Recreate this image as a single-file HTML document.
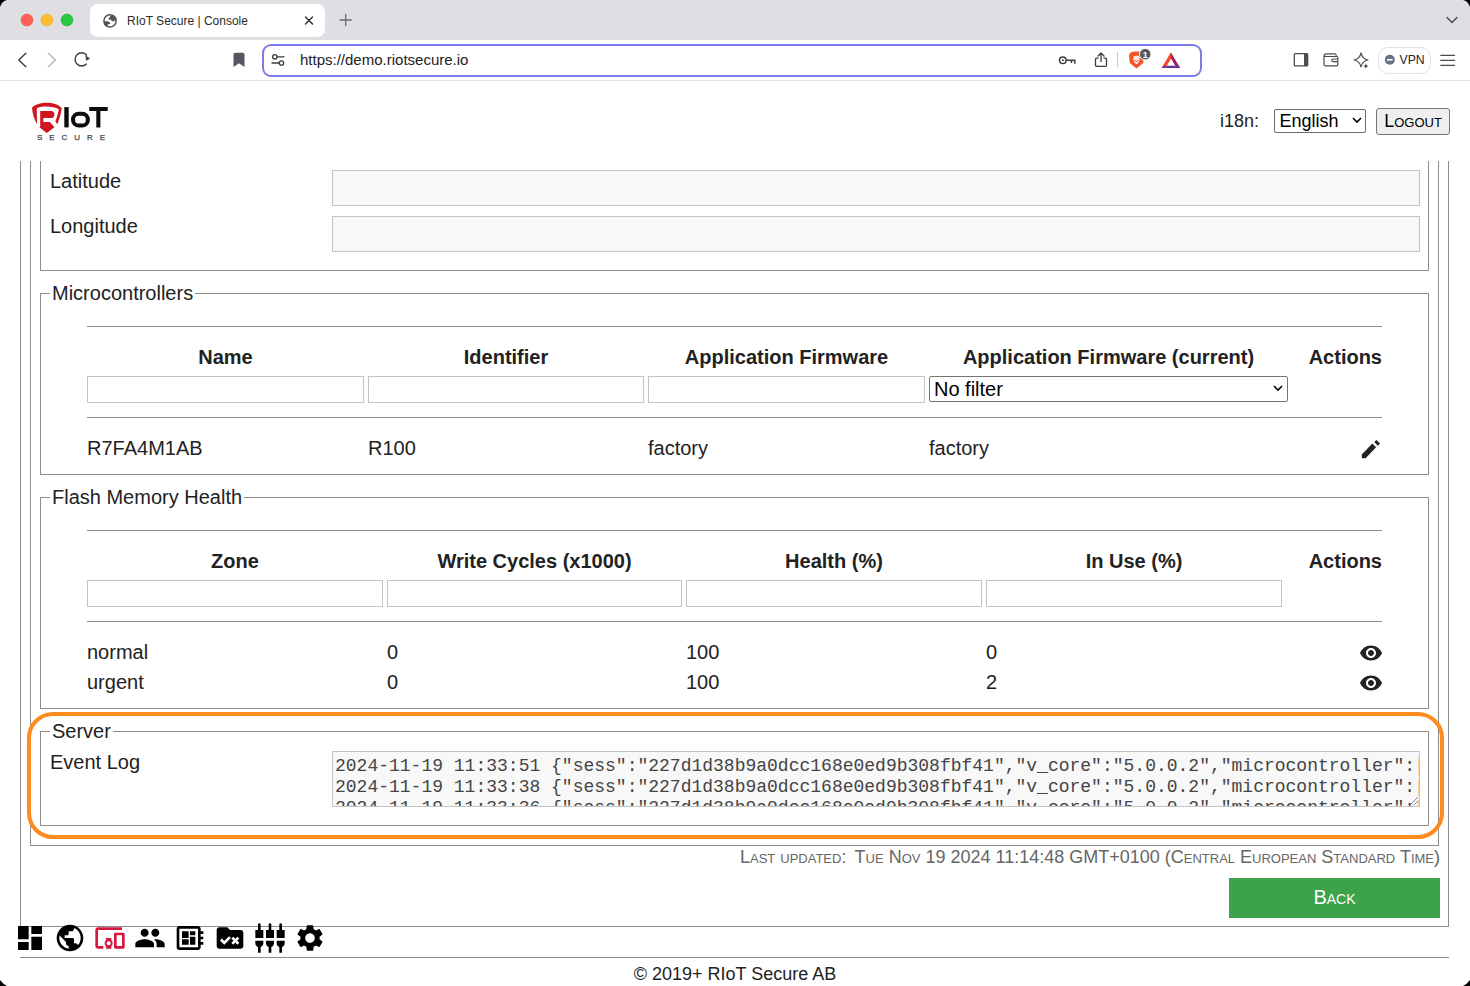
<!DOCTYPE html>
<html><head><meta charset="utf-8">
<style>
*{box-sizing:border-box;margin:0;padding:0}
html,body{width:1470px;height:986px;overflow:hidden;background:#fff;font-family:"Liberation Sans",sans-serif;color:#222}
.a{position:absolute}
.hl{position:absolute;height:1px;background:#8c8c8c}
.vl{position:absolute;width:1px;background:#8c8c8c}
.t{position:absolute;white-space:pre;line-height:1}
.inp{position:absolute;border:1px solid #c4c4c4;background:#fff}
.inpg{position:absolute;border:1px solid #c4c4c4;background:#f8f8f8}
.th{position:absolute;white-space:pre;font-weight:bold;font-size:20px;line-height:1}
.td{position:absolute;white-space:pre;font-size:20px;line-height:1}
</style></head><body>
<!-- tab strip -->
<div class="a" style="left:0;top:0;width:1470px;height:40px;background:#dfdfe3"></div>
<div class="a" style="left:90px;top:4px;width:235px;height:33px;background:#fff;border-radius:8px"></div>
<div id="tabtext" class="t" style="left:127px;top:14.5px;font-size:12px;color:#2b2b2b">RIoT Secure | Console</div>
<!-- toolbar -->
<div class="a" style="left:0;top:80px;width:1470px;height:1px;background:#e4e4e6"></div>
<div class="a" style="left:262px;top:43.5px;width:939.5px;height:33px;border:2px solid #7b7be9;border-radius:9px"></div>
<div id="urltext" class="t" style="left:300px;top:51.5px;font-size:15px;color:#222">https://demo.riotsecure.io</div>
<div class="a" style="left:1377.5px;top:46.5px;width:53.5px;height:27px;border:1px solid #e2e2e6;border-radius:10px"></div>
<div class="t" style="left:1399.5px;top:53.5px;font-size:12.2px;color:#222">VPN</div>
<svg class="a" style="left:0;top:0" width="1470" height="161" viewBox="0 0 1470 161">
 <!-- window corners -->
 <path d="M0 0H7Q2 1 0 7Z" fill="#000"/>
 <path d="M1470 0H1463Q1468 1 1470 7Z" fill="#000"/>
 <!-- traffic lights -->
 <circle cx="27" cy="20" r="6" fill="#fe5f57" stroke="#e2463f" stroke-width="0.5"/>
 <circle cx="47" cy="20" r="6" fill="#febc2e" stroke="#dea123" stroke-width="0.5"/>
 <circle cx="67" cy="20" r="6" fill="#28c840" stroke="#1aab29" stroke-width="0.5"/>
 <!-- tab globe -->
 <circle cx="110" cy="20.9" r="6.1" fill="none" stroke="#51555b" stroke-width="1.5"/>
 <path d="M111.2 15.2 L108.9 18.1 L108.7 19.4 L110.7 19.7 L111.9 20.9 L113.2 21.6 L114.7 20.4 L116.3 20.8 L116.5 18 L114 15.2Z" fill="#51555b"/>
 <path d="M104.2 21.2 L108.1 21.2 L110.1 22.7 L110.4 23.7 L108.1 24.2 L107.6 25.8 L106.8 27 L104.5 25Z" fill="#51555b"/>
 <!-- close x -->
 <path d="M305.5 17L312.5 24M312.5 17L305.5 24" stroke="#2b2b2b" stroke-width="1.4" stroke-linecap="round"/>
 <!-- plus -->
 <path d="M345.7 14.5V25.5M340.2 20H351.2" stroke="#6a6a6e" stroke-width="1.3" stroke-linecap="round"/>
 <!-- chevron -->
 <path d="M1447 17.5L1452 22.5L1457 17.5" fill="none" stroke="#4a4a4e" stroke-width="1.4" stroke-linecap="round" stroke-linejoin="round"/>
 <!-- back / fwd / reload -->
 <path d="M25.8 53.2L18.8 60L25.8 66.8" fill="none" stroke="#3d3d40" stroke-width="1.4" stroke-linecap="round" stroke-linejoin="round"/>
 <path d="M48.3 53.2L55.3 60L48.3 66.8" fill="none" stroke="#b4b4b8" stroke-width="1.4" stroke-linecap="round" stroke-linejoin="round"/>
 <path d="M86.4 64 A6.6 6.6 0 1 1 86.6 55" fill="none" stroke="#3d3d40" stroke-width="1.4" stroke-linecap="round"/>
 <path d="M85.2 55.3L90 58.5L86.3 60.7Z" fill="#3d3d40"/>
 <!-- bookmark -->
 <path d="M233.5 54.5Q233.5 52.8 235.3 52.8H242.7Q244.5 52.8 244.5 54.5V67L239 63.2L233.5 67Z" fill="#55585e"/>
 <!-- tune -->
 <circle cx="274.8" cy="56.8" r="2.2" fill="none" stroke="#3d3d40" stroke-width="1.3"/>
 <path d="M277.3 56.8H284" stroke="#3d3d40" stroke-width="1.3" stroke-linecap="round"/>
 <circle cx="281.5" cy="63" r="2.2" fill="none" stroke="#3d3d40" stroke-width="1.3"/>
 <path d="M272 63H279" stroke="#3d3d40" stroke-width="1.3" stroke-linecap="round"/>
 <!-- key -->
 <circle cx="1062.8" cy="60.3" r="3.3" fill="none" stroke="#3d3d40" stroke-width="1.5"/>
 <circle cx="1062.8" cy="60.3" r="1" fill="#3d3d40"/>
 <path d="M1066 60.3H1074.8V63.8M1071.5 60.3V63" fill="none" stroke="#3d3d40" stroke-width="1.5"/>
 <!-- share -->
 <path d="M1101 53V61.5M1098 56L1101 53L1104 56" fill="none" stroke="#3d3d40" stroke-width="1.3" stroke-linecap="round" stroke-linejoin="round"/>
 <path d="M1098.5 58.2H1096.5Q1095.5 58.2 1095.5 59.2V65.3Q1095.5 66.3 1096.5 66.3H1105.5Q1106.5 66.3 1106.5 65.3V59.2Q1106.5 58.2 1105.5 58.2H1103.5" fill="none" stroke="#3d3d40" stroke-width="1.3"/>
 <path d="M1117.5 52V67" stroke="#c8c8cc" stroke-width="1"/>
 <!-- brave -->
 <path d="M1130.5 52.5L1134 51.5H1139L1142.5 52.5L1144 55L1143.2 63L1136.5 68.6L1129.8 63L1129 55Z" fill="#f1562a"/>
 <path d="M1133.5 56.5L1136.5 55.5L1139.5 56.5L1139.8 60L1138.3 63L1136.5 64.2L1134.7 63L1133.2 60Z" fill="#fff" opacity="0.85"/>
 <path d="M1134.3 60.3L1136.5 61.5L1138.7 60.3" fill="none" stroke="#f1562a" stroke-width="1"/>
 <circle cx="1145.2" cy="54.2" r="5.8" fill="#56585e" stroke="#fff" stroke-width="1"/>
 <text x="1145.2" y="57.7" font-family="Liberation Sans" font-size="9" font-weight="bold" fill="#fff" text-anchor="middle">1</text>
 <!-- BAT -->
 <path d="M1171 52.5L1161.8 68H1180.2Z" fill="#9e1f63"/>
 <path d="M1171 52.5L1161.8 68H1165.5L1171 58.5Z" fill="#ff4724"/>
 <path d="M1161.8 68H1180.2L1178 65.8H1164.2Z" fill="#662d91"/>
 <path d="M1171 58.5L1165.5 68H1176.5Z" fill="#fff"/>
 <path d="M1165.5 68H1176.5L1175.2 65.8H1166.8Z" fill="#662d91"/>
 <!-- sidebar -->
 <rect x="1294.3" y="53.7" width="13.4" height="12.2" rx="1" fill="none" stroke="#4a4d53" stroke-width="1.3"/>
 <rect x="1304" y="53.7" width="4" height="12.2" fill="#4a4d53"/>
 <!-- wallet -->
 <path d="M1324 56.5V64.5Q1324 65.9 1325.4 65.9H1336.5Q1337.8 65.9 1337.8 64.5V57.8Q1337.8 56.5 1336.5 56.5H1324Q1324 53.8 1326.2 53.8H1334.5Q1336.3 53.8 1336.3 55.8" fill="none" stroke="#4a4d53" stroke-width="1.2"/>
 <path d="M1337.8 59H1333.2Q1331.8 59 1331.8 60.3Q1331.8 61.7 1333.2 61.7H1337.8" fill="none" stroke="#4a4d53" stroke-width="1.2"/>
 <!-- leo -->
 <path d="M1361 52.8Q1362.2 58.8 1368 60Q1362.2 61.2 1361 67Q1359.8 61.2 1354 60Q1359.8 58.8 1361 52.8Z" fill="none" stroke="#4a4d53" stroke-width="1.2" stroke-linejoin="round"/>
 <path d="M1365.8 63.5L1366.6 65.3L1368.4 66.1L1366.6 66.9L1365.8 68.7L1365 66.9L1363.2 66.1L1365 65.3Z" fill="#4a4d53"/>
 <!-- vpn dot -->
 <circle cx="1389.8" cy="59.8" r="5" fill="#6b7085"/>
 <path d="M1387 59.8H1392.6" stroke="#fff" stroke-width="1.6"/>
 <!-- hamburger -->
 <path d="M1440.3 55.3H1455M1440.3 60.3H1455M1440.3 65.3H1455" stroke="#4a4d53" stroke-width="1.3"/>
 <!-- logo -->
 <path d="M32 107.5 C38 101.2 55.5 100.8 61.8 108.2 C61 114 59.3 119.5 57.3 124.2 L55.4 121.6 C57 117 58.3 113 58.8 109.3 C53.5 105.8 40.5 105.6 36.8 108.3 L37 124.2 C34.2 119 32.4 113.5 32 107.5Z" fill="#d0161f"/>
 <path d="M40.2 111H51.2Q54.4 111 54.4 114.5Q54.4 118 51.2 118H43.4V121.9H49.9L54.4 127.2L46.7 132.9L39.4 127.2L40.2 126.4Z" fill="#d0161f"/>
 <rect x="64.3" y="107.1" width="4.4" height="20.3" fill="#0c0c0c"/>
 <rect x="73" y="113.8" width="14.9" height="11.8" rx="5.9" fill="none" stroke="#0c0c0c" stroke-width="4"/>
 <path d="M89.2 107.1H107.7V111H100.4V127.4H96.3V111H89.2Z" fill="#0c0c0c"/>
 <text x="37" y="140" font-family="Liberation Sans" font-size="8" fill="#454545" stroke="#454545" stroke-width="0.25" textLength="68" lengthAdjust="spacing">SECURE</text>
</svg>

<!-- header -->
<div id="i18n" class="t" style="left:1220px;top:112px;font-size:18px">i18n:</div>
<div class="a" style="left:1274px;top:109px;width:92px;height:24px;border:1px solid #6b6b6b;border-radius:2px;background:#fff"></div>
<div class="t" style="left:1279.5px;top:112px;font-size:18px;color:#000">English</div>
<svg class="a" style="left:1350px;top:115px" width="14" height="10"><path d="M3 3L7 7L11 3" fill="none" stroke="#000" stroke-width="1.6"/></svg>
<div class="a" style="left:1376px;top:108px;width:74px;height:27px;border:1px solid #767676;border-radius:3px;background:#efefef"></div>
<div class="t" style="left:1376px;top:112px;width:74px;text-align:center;font-size:18px;font-variant:small-caps;color:#000">Logout</div>

<!-- outer boxes -->
<div class="vl" style="left:20px;top:161px;height:765px"></div>
<div class="vl" style="left:1448px;top:161px;height:765px"></div>
<div class="hl" style="left:20px;top:926px;width:1429px"></div>
<div class="vl" style="left:30px;top:161px;height:684px"></div>
<div class="vl" style="left:1438px;top:161px;height:684px"></div>
<div class="hl" style="left:30px;top:845px;width:1409px"></div>

<!-- location fieldset -->
<div class="vl" style="left:40px;top:161px;height:109px"></div>
<div class="vl" style="left:1428px;top:161px;height:109px"></div>
<div class="hl" style="left:40px;top:270px;width:1389px"></div>
<div class="td" style="left:50px;top:170.6px">Latitude</div>
<div class="inpg" style="left:332px;top:170px;width:1088px;height:36px"></div>
<div class="td" style="left:50px;top:216.4px">Longitude</div>
<div class="inpg" style="left:332px;top:216px;width:1088px;height:36px"></div>

<!-- microcontrollers fieldset -->
<div class="a" style="left:40px;top:293px;width:1389px;height:182px;border:1px solid #8c8c8c"></div>
<div class="td" style="left:50px;top:283.1px;background:#fff;padding:0 2px">Microcontrollers</div>
<div class="hl" style="left:87px;top:326px;width:1295px"></div>
<div class="th" style="left:87px;top:347px;width:277px;text-align:center">Name</div>
<div class="th" style="left:368px;top:347px;width:276px;text-align:center">Identifier</div>
<div class="th" style="left:648px;top:347px;width:277px;text-align:center">Application Firmware</div>
<div class="th" style="left:929px;top:347px;width:359px;text-align:center">Application Firmware (current)</div>
<div class="th" style="left:1282px;top:347px;width:100px;text-align:right">Actions</div>
<div class="inp" style="left:87px;top:376px;width:277px;height:27px"></div>
<div class="inp" style="left:368px;top:376px;width:276px;height:27px"></div>
<div class="inp" style="left:648px;top:376px;width:277px;height:27px"></div>
<div class="a" style="left:929px;top:376px;width:359px;height:26px;border:1px solid #767676;border-radius:2px;background:#fff"></div>
<div class="td" style="left:934px;top:379px;color:#000">No filter</div>
<div class="hl" style="left:87px;top:417px;width:1295px"></div>
<div class="td" style="left:87px;top:438.2px">R7FA4M1AB</div>
<div class="td" style="left:368px;top:438.2px">R100</div>
<div class="td" style="left:648px;top:438.2px">factory</div>
<div class="td" style="left:929px;top:438.2px">factory</div>

<!-- flash fieldset -->
<div class="a" style="left:40px;top:497px;width:1389px;height:212px;border:1px solid #8c8c8c"></div>
<div class="td" style="left:50px;top:487.1px;background:#fff;padding:0 2px">Flash Memory Health</div>
<div class="hl" style="left:87px;top:530px;width:1295px"></div>
<div class="th" style="left:87px;top:551.1px;width:296px;text-align:center">Zone</div>
<div class="th" style="left:387px;top:551.1px;width:295px;text-align:center">Write Cycles (x1000)</div>
<div class="th" style="left:686px;top:551.1px;width:296px;text-align:center">Health (%)</div>
<div class="th" style="left:986px;top:551.1px;width:296px;text-align:center">In Use (%)</div>
<div class="th" style="left:1282px;top:551.1px;width:100px;text-align:right">Actions</div>
<div class="inp" style="left:87px;top:580px;width:296px;height:27px"></div>
<div class="inp" style="left:387px;top:580px;width:295px;height:27px"></div>
<div class="inp" style="left:686px;top:580px;width:296px;height:27px"></div>
<div class="inp" style="left:986px;top:580px;width:296px;height:27px"></div>
<div class="hl" style="left:87px;top:621px;width:1295px"></div>
<div class="td" style="left:87px;top:641.9px">normal</div>
<div class="td" style="left:387px;top:641.9px">0</div>
<div class="td" style="left:686px;top:641.9px">100</div>
<div class="td" style="left:986px;top:641.9px">0</div>
<div class="td" style="left:87px;top:671.5px">urgent</div>
<div class="td" style="left:387px;top:671.5px">0</div>
<div class="td" style="left:686px;top:671.5px">100</div>
<div class="td" style="left:986px;top:671.5px">2</div>

<!-- server fieldset -->
<div class="a" style="left:40px;top:731px;width:1389px;height:95px;border:1px solid #8c8c8c"></div>
<div class="td" style="left:50px;top:720.7px;background:#fff;padding:0 2px">Server</div>
<div class="td" style="left:50px;top:751.9px">Event Log</div>
<div class="a" style="left:332px;top:751px;width:1088px;height:56px;border:1px solid #c4c4c4;background:#f8f8f8;overflow:hidden">
<div style="position:absolute;left:2px;top:3.5px;font-family:'Liberation Mono',monospace;font-size:18px;line-height:21px;white-space:pre;color:#444">2024-11-19 11:33:51 {"sess":"227d1d38b9a0dcc168e0ed9b308fbf41","v_core":"5.0.0.2","microcontroller":[
2024-11-19 11:33:38 {"sess":"227d1d38b9a0dcc168e0ed9b308fbf41","v_core":"5.0.0.2","microcontroller":[
2024-11-19 11:33:36 {"sess":"227d1d38b9a0dcc168e0ed9b308fbf41","v_core":"5.0.0.2","microcontroller":[</div>
</div>
<svg class="a" style="left:1408px;top:795px" width="11" height="11"><path d="M10 2L2 10M10 6L6 10" stroke="#8a8a8a" stroke-width="1"/></svg>
<!-- orange highlight -->
<div class="a" style="left:27px;top:712px;width:1417px;height:127px;border:4.5px solid #fd8b1d;border-radius:26px"></div>

<!-- last updated -->
<div class="t" style="left:700px;top:847.9px;width:740px;text-align:right;font-size:18px;font-variant:small-caps;color:#666">Last updated:<span style="margin-left:3.5px"></span> Tue Nov 19 2024 11:14:48 GMT+0100 (Central European Standard Time)</div>
<div class="a" style="left:1229px;top:878px;width:211px;height:40px;background:#3ca34a"></div>
<div class="t" style="left:1229px;top:887px;width:211px;text-align:center;font-size:20px;font-variant:small-caps;color:#fff">Back</div>

<svg class="a" style="left:0;top:976px" width="10" height="10"><path d="M0 4Q3 8 7 10H0Z" fill="#000"/></svg>
<svg class="a" style="left:1460px;top:976px" width="10" height="10"><path d="M10 4Q7 8 3 10H10Z" fill="#000"/></svg>
<!-- nav icons -->
<svg class="a" style="left:14px;top:922px" width="32" height="32" viewBox="0 0 24 24"><path fill="#000" d="M3 13h8V3H3v10zm0 8h8v-6H3v6zm10 0h8V11h-8v10zm0-18v6h8V3h-8z"/></svg>
<svg class="a" style="left:54px;top:922px" width="32" height="32" viewBox="0 0 24 24"><path fill="#000" d="M12 2C6.48 2 2 6.48 2 12s4.48 10 10 10 10-4.48 10-10S17.52 2 12 2zm-1 17.93c-3.950-.49-7-3.85-7-7.93 0-.62.08-1.210.21-1.79L9 15v1c0 1.1.9 2 2 2v1.93zm6.9-2.54c-.26-.81-1-1.39-1.9-1.39h-1v-3c0-.55-.45-1-1-1H8v-2h2c.55 0 1-.45 1-1V7h2c1.1 0 2-.9 2-2v-.41c2.93 1.19 5 4.06 5 7.41 0 2.08-.8 3.97-2.1 5.39z"/></svg>
<svg class="a" style="left:94px;top:922px" width="32" height="32" viewBox="0 0 24 24"><path fill="#d6163c" d="M3 6h18V4H3c-1.1 0-2 .9-2 2v12c0 1.1.9 2 2 2h4v-2H3V6zm10 6H9v1.78c-.61.55-1 1.33-1 2.22s.39 1.67 1 2.22V20h4v-1.78c.61-.55 1-1.34 1-2.22s-.39-1.670-1-2.22V12zm-2 5.5c-.83 0-1.5-.67-1.5-1.5s.67-1.5 1.5-1.5 1.5.67 1.5 1.5-.67 1.5-1.5 1.5zM22 8h-6c-.5 0-1 .5-1 1v10c0 .5.5 1 1 1h6c.5 0 1-.5 1-1V9c0-.5-.5-1-1-1zm-1 10h-4v-8h4v8z"/></svg>
<svg class="a" style="left:134px;top:922px" width="32" height="32" viewBox="0 0 24 24"><path fill="#000" d="M16 11c1.66 0 2.99-1.34 2.99-3S17.66 5 16 5c-1.66 0-3 1.34-3 3s1.34 3 3 3zm-8 0c1.66 0 2.99-1.34 2.99-3S9.66 5 8 5C6.34 5 5 6.34 5 8s1.34 3 3 3zm0 2c-2.33 0-7 1.17-7 3.5V19h14v-2.5c0-2.33-4.67-3.5-7-3.5zm8 0c-.29 0-.62.02-.97.05 1.16.84 1.97 1.97 1.97 3.45V19h6v-2.5c0-2.33-4.67-3.5-7-3.5z"/></svg>
<svg class="a" style="left:174px;top:922px" width="32" height="32" viewBox="0 0 24 24"><path fill="#000" d="M22 9V7h-2V5c0-1.1-.9-2-2-2H4c-1.1 0-2 .9-2 2v14c0 1.1.9 2 2 2h14c1.1 0 2-.9 2-2v-2h2v-2h-2v-2h2v-2h-2V9h2zm-4 10H4V5h14v14zM6 13h5v4H6zm6-6h4v3h-4zM6 7h5v5H6zm6 4h4v6h-4z"/></svg>
<svg class="a" style="left:214px;top:922px" width="32" height="32" viewBox="0 0 24 24"><path fill="#000" d="M20 6h-8l-2-2H4c-1.1 0-1.99.9-1.99 2L2 18c0 1.1.9 2 2 2h16c1.1 0 2-.9 2-2V8c0-1.1-.9-2-2-2zm-12.29 11L4.5 13.79l1.41-1.41 1.8 1.79 3.54-3.54 1.41 1.41L7.71 17zM19 15.59L17.59 17 16 15.41 14.41 17 13 15.59 14.59 14 13 12.41 14.41 11 16 12.59 17.59 11 19 12.41 17.41 14 19 15.59z"/></svg>
<svg class="a" style="left:254px;top:922px" width="32" height="32" viewBox="0 0 24 24"><path fill="#000" d="M5 2c0-.55-.45-1-1-1s-1 .45-1 1v4H1v6h6V6H5V2zm4 14c0 1.3.84 2.4 2 2.82V23h2v-4.18c1.16-.41 2-1.51 2-2.82v-2H9v2zm-8 0c0 1.3.84 2.4 2 2.82V23h2v-4.18C6.16 18.4 7 17.3 7 16v-2H1v2zM21 6V2c0-.55-.45-1-1-1s-1 .45-1 1v4h-2v6h6V6h-2zm-8-4c0-.55-.45-1-1-1s-1 .45-1 1v4H9v6h6V6h-2V2zm4 14c0 1.3.84 2.4 2 2.82V23h2v-4.18c1.16-.41 2-1.51 2-2.82v-2h-6v2z"/></svg>
<svg class="a" style="left:294px;top:922px" width="32" height="32" viewBox="0 0 24 24"><path fill="#000" d="M19.14 12.94c.04-.3.06-.61.06-.94 0-.32-.02-.64-.07-.94l2.03-1.58c.18-.14.23-.41.12-.61l-1.92-3.32c-.12-.22-.37-.29-.59-.22l-2.39.96c-.5-.38-1.03-.7-1.62-.94l-.36-2.54c-.04-.24-.24-.41-.48-.41h-3.84c-.24 0-.43.17-.47.41l-.36 2.54c-.59.24-1.13.57-1.62.94l-2.39-.96c-.22-.08-.47 0-.59.22L2.74 8.87c-.12.21-.08.47.12.61l2.03 1.58c-.05.3-.09.63-.09.94s.02.64.07.94l-2.03 1.58c-.18.14-.23.41-.12.61l1.92 3.32c.12.22.37.29.59.22l2.39-.96c.5.38 1.03.7 1.62.94l.36 2.54c.05.24.24.41.48.41h3.84c.24 0 .44-.17.47-.41l.36-2.54c.59-.24 1.13-.56 1.62-.94l2.39.96c.22.08.47 0 .59-.22l1.920-3.32c.12-.22.07-.47-.12-.61l-2.01-1.58zM12 15.6c-1.98 0-3.6-1.62-3.6-3.6s1.62-3.6 3.6-3.6 3.6 1.62 3.6 3.6-1.62 3.6-3.6 3.6z"/></svg>
<svg class="a" style="left:1359px;top:641px" width="24" height="24" viewBox="0 0 24 24"><path fill="#222" d="M12 4.5C7 4.5 2.73 7.61 1 12c1.73 4.39 6 7.5 11 7.5s9.27-3.11 11-7.5c-1.73-4.39-6-7.5-11-7.5zM12 17c-2.76 0-5-2.240-5-5s2.24-5 5-5 5 2.24 5 5-2.24 5-5 5zm0-8c-1.66 0-3 1.34-3 3s1.34 3 3 3 3-1.34 3-3-1.34-3-3-3z"/></svg>
<svg class="a" style="left:1359px;top:671px" width="24" height="24" viewBox="0 0 24 24"><path fill="#222" d="M12 4.5C7 4.5 2.73 7.61 1 12c1.73 4.39 6 7.5 11 7.5s9.27-3.11 11-7.5c-1.73-4.39-6-7.5-11-7.5zM12 17c-2.76 0-5-2.240-5-5s2.24-5 5-5 5 2.24 5 5-2.24 5-5 5zm0-8c-1.66 0-3 1.34-3 3s1.34 3 3 3 3-1.34 3-3-1.34-3-3-3z"/></svg>
<svg class="a" style="left:1350px;top:430px" width="40" height="40" viewBox="1350 430 40 40"><path fill="#222" d="M1361.8 458.2V454.4L1372.3 443.6L1376.1 447.3L1365.6 458.2Z M1374.3 442L1376.4 439.9L1380 443.5L1377.8 445.7Z"/></svg>
<svg class="a" style="left:1270px;top:380px" width="16" height="16"><path d="M4 6L8 10L12 6" fill="none" stroke="#000" stroke-width="1.6"/></svg>
<!-- nav -->
<div class="hl" style="left:20px;top:957px;width:1429px"></div>
<div class="t" style="left:0;top:965.3px;width:1470px;text-align:center;font-size:18px">© 2019+ RIoT Secure AB</div>

</body></html>
